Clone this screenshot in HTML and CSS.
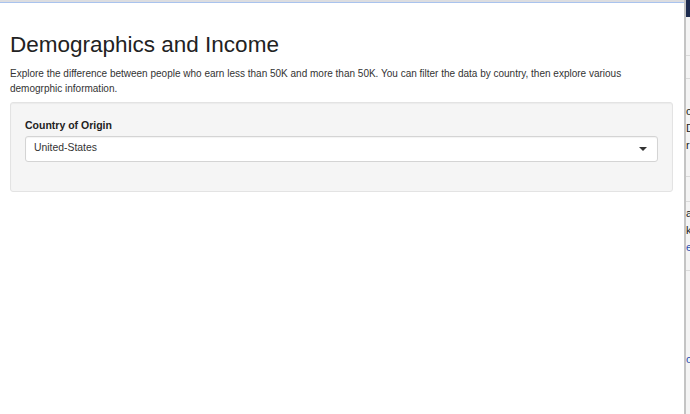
FILE: index.html
```html
<!DOCTYPE html>
<html>
<head>
    <title>Demographics and Income</title>
    <meta charset="utf-8">
    <link rel="stylesheet" href="styles.css">
</head>
<body>
    <div class="app">
        <div class="main">
            <div class="topline"></div>
            <div class="page">
                <h2 class="title">Demographics and Income</h2>
                <p class="intro">Explore the difference between people who earn less than 50K and more than 50K. You can filter the data by country, then explore various demogrphic information.</p>

                <div class="well">
                    <div class="form-group">
                        <label class="control-label">Country of Origin</label>
                        <div class="select">
                            <span class="select-value">United-States</span>
                            <span class="caret"></span>
                        </div>
                    </div>
                </div>
            </div>
        </div>

        <!-- edge of the window behind -->
        <div class="edge">
            <div class="edge-bar"></div>
            <div class="edge-content">
                <div class="edge-head"></div>
                <div class="edge-rule r1"></div>
                <div class="edge-rule r2"></div>
                <div class="edge-txt t1">o</div>
                <div class="edge-txt">D</div>
                <div class="edge-txt">r</div>
                <div class="edge-rule r3"></div>
                <div class="edge-rule r4"></div>
                <div class="edge-txt t2">a</div>
                <div class="edge-txt">k</div>
                <div class="edge-txt link">e</div>
                <div class="edge-rule r5"></div>
                <div class="edge-txt link t3">o</div>
            </div>
        </div>
    </div>
</body>
</html>
```

FILE: styles.css
```css
html, body {
    margin: 0;
    padding: 0;
    height: 100%;
}
body {
    font-family: "Liberation Sans", Arial, sans-serif;
    font-size: 10px;
    line-height: 14.6px;
    color: #333;
    background: #fff;
    overflow: hidden;
}
.app {
    display: flex;
    height: 100%;
}
.main {
    width: 684px;
    flex: none;
}
.topline {
    height: 2px;
    background: #dcdde0;
    border-bottom: 1px solid #a9c3ee;
}
.page {
    padding: 0 11px 0 10px;
}
.title {
    font-size: 22.5px;
    font-weight: normal;
    line-height: 24px;
    margin: 30px 0 10px;
    color: #222;
}
.intro {
    margin: 0 0 6px;
}
.well {
    background-color: #f5f5f5;
    border: 1px solid #e3e3e3;
    border-radius: 3px;
    padding: 15px 14px 14px 14px;
    box-shadow: inset 0 1px 1px rgba(0, 0, 0, 0.04);
}
.form-group {
    margin-bottom: 15px;
}
.control-label {
    display: block;
    font-size: 10.5px;
    font-weight: bold;
    margin-bottom: 3px;
    color: #222;
}
.select {
    display: flex;
    align-items: center;
    justify-content: space-between;
    height: 24px;
    border: 1px solid #d4d4d4;
    border-radius: 3px;
    background: #fff;
    padding: 0 10px 0 8px;
    font-size: 10.4px;
    box-shadow: inset 0 1px 1px rgba(0, 0, 0, 0.05);
}
.caret {
    width: 0;
    height: 0;
    border-left: 4px solid transparent;
    border-right: 4px solid transparent;
    border-top: 4px solid #333;
}
.edge {
    flex: 1;
    display: flex;
}
.edge-bar {
    width: 2px;
    background: #c4c4c4;
}
.edge-content {
    flex: 1;
    background: #f4f4f4;
    font-size: 11px;
    line-height: 17px;
    color: #222;
    overflow: hidden;
}
.edge-head {
    height: 17px;
    background: #1d2b4f;
}
.edge-rule {
    height: 1px;
    background: #dadada;
}
.r1 {
    margin-top: 38px;
}
.r2 {
    margin-top: 22px;
}
.edge-txt {
    white-space: nowrap;
}
.t1 {
    margin-top: 24px;
}
.r3 {
    margin-top: 22px;
}
.r4 {
    margin-top: 24px;
}
.t2 {
    margin-top: 3px;
}
.link {
    color: #2a4fb0;
}
.r5 {
    margin-top: 14px;
}
.t3 {
    margin-top: 80px;
}
```
